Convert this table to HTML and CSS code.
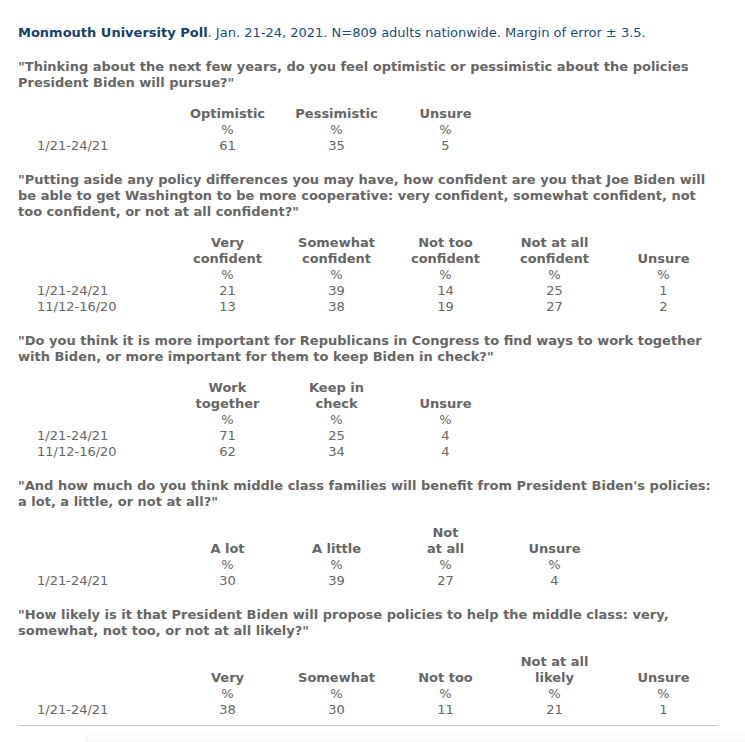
FILE: index.html
```html
<!DOCTYPE html>
<html>
<head>
<meta charset="utf-8">
<link rel="stylesheet" href="styles.css">
</head>
<body>
<div class="poll">
  <p class="source"><b>Monmouth University Poll</b>. Jan. 21-24, 2021. N=809 adults nationwide. Margin of error ± 3.5.</p>

  <p class="q">"Thinking about the next few years, do you feel optimistic or pessimistic about the policies President Biden will pursue?"</p>
  <table class="t">
    <colgroup><col class="c0"><col class="c"><col class="c"><col class="c"><col class="c"><col class="c"></colgroup>
    <tr class="h"><td></td><th>Optimistic</th><th>Pessimistic</th><th>Unsure</th><td></td><td></td></tr>
    <tr><td></td><td>%</td><td>%</td><td>%</td><td></td><td></td></tr>
    <tr><td class="d">1/21-24/21</td><td>61</td><td>35</td><td>5</td><td></td><td></td></tr>
  </table>

  <p class="q">"Putting aside any policy differences you may have, how confident are you that Joe Biden will be able to get Washington to be more cooperative: very confident, somewhat confident, not too confident, or not at all confident?"</p>
  <table class="t">
    <colgroup><col class="c0"><col class="c"><col class="c"><col class="c"><col class="c"><col class="c"></colgroup>
    <tr class="h"><td></td><th>Very<br>confident</th><th>Somewhat<br>confident</th><th>Not too<br>confident</th><th>Not at all<br>confident</th><th>Unsure</th></tr>
    <tr><td></td><td>%</td><td>%</td><td>%</td><td>%</td><td>%</td></tr>
    <tr><td class="d">1/21-24/21</td><td>21</td><td>39</td><td>14</td><td>25</td><td>1</td></tr>
    <tr><td class="d">11/12-16/20</td><td>13</td><td>38</td><td>19</td><td>27</td><td>2</td></tr>
  </table>

  <p class="q">"Do you think it is more important for Republicans in Congress to find ways to work together with Biden, or more important for them to keep Biden in check?"</p>
  <table class="t">
    <colgroup><col class="c0"><col class="c"><col class="c"><col class="c"><col class="c"><col class="c"></colgroup>
    <tr class="h"><td></td><th>Work<br>together</th><th>Keep in<br>check</th><th>Unsure</th><td></td><td></td></tr>
    <tr><td></td><td>%</td><td>%</td><td>%</td><td></td><td></td></tr>
    <tr><td class="d">1/21-24/21</td><td>71</td><td>25</td><td>4</td><td></td><td></td></tr>
    <tr><td class="d">11/12-16/20</td><td>62</td><td>34</td><td>4</td><td></td><td></td></tr>
  </table>

  <p class="q">"And how much do you think middle class families will benefit from President Biden's policies: a lot, a little, or not at all?"</p>
  <table class="t">
    <colgroup><col class="c0"><col class="c"><col class="c"><col class="c"><col class="c"><col class="c"></colgroup>
    <tr class="h"><td></td><th>A lot</th><th>A little</th><th>Not<br>at all</th><th>Unsure</th><td></td></tr>
    <tr><td></td><td>%</td><td>%</td><td>%</td><td>%</td><td></td></tr>
    <tr><td class="d">1/21-24/21</td><td>30</td><td>39</td><td>27</td><td>4</td><td></td></tr>
  </table>

  <p class="q">"How likely is it that President Biden will propose policies to help the middle class: very, somewhat, not too, or not at all likely?"</p>
  <table class="t">
    <colgroup><col class="c0"><col class="c"><col class="c"><col class="c"><col class="c"><col class="c"></colgroup>
    <tr class="h"><td></td><th>Very</th><th>Somewhat</th><th>Not too</th><th>Not at all<br>likely</th><th>Unsure</th></tr>
    <tr><td></td><td>%</td><td>%</td><td>%</td><td>%</td><td>%</td></tr>
    <tr><td class="d">1/21-24/21</td><td>38</td><td>30</td><td>11</td><td>21</td><td>1</td></tr>
  </table>

  <hr class="rule">
  <div class="shade"></div>
</div>
</body>
</html>
```

FILE: styles.css
```css
html, body {
  margin: 0;
  padding: 0;
  background: #ffffff;
}

body {
  font-family: "DejaVu Sans", Verdana, sans-serif;
  font-size: 13px;
  line-height: 16px;
  color: #666666;
  overflow: hidden;
}

.poll {
  padding: 25px 0 0 18px;
  width: 700px;
}

.source {
  margin: 0 0 18px 0;
  color: #1d4c7a;
}

.source b {
  color: #17406b;
}

.q {
  margin: 0 0 15px 0;
  font-weight: bold;
  color: #666666;
}

.t {
  width: 700px;
  border-collapse: collapse;
  table-layout: fixed;
  margin: 0 0 18px 0;
}

.c0 {
  width: 155px;
}

.c {
  width: 109px;
}

.t td, .t th {
  padding: 0;
  text-align: center;
  line-height: 16px;
  vertical-align: bottom;
  color: #666666;
}

.t th {
  font-weight: bold;
}

.t td.d {
  text-align: left;
  padding-left: 19px;
}

.rule {
  margin: -11px 0 0 0;
  border: 0;
  border-top: 1px solid #c9c9c9;
  height: 0;
  width: 700px;
}

.shade {
  margin: 4px 0 0 67px;
  width: 660px;
  height: 20px;
  background: linear-gradient(to bottom, #ffffff, #f1f1f1);
}
```
